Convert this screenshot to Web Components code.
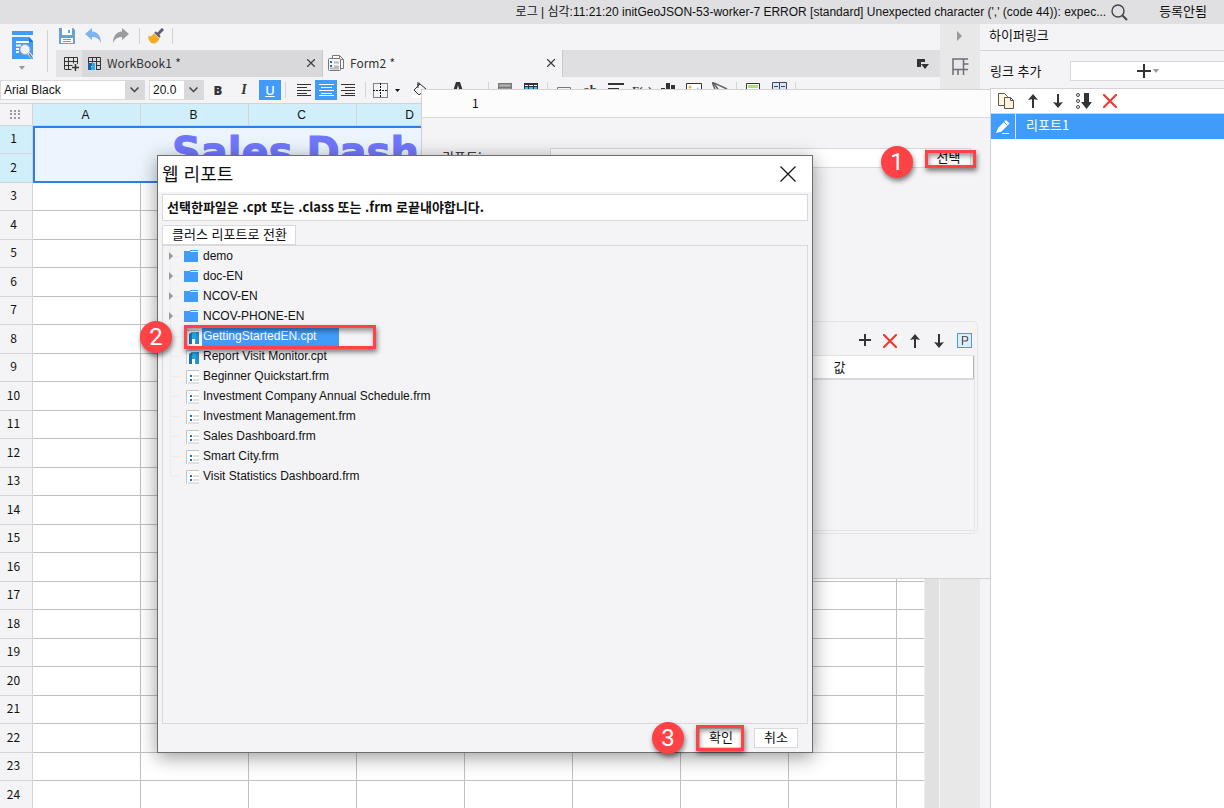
<!DOCTYPE html>
<html lang="ko">
<head>
<meta charset="utf-8">
<title>Report Designer</title>
<style>
html, body { margin: 0; height: 100%; }
body { overflow: hidden; background: #f4f4f6; color: #111; font: 12px/16px "Liberation Sans", "Noto Sans CJK KR", sans-serif; }
</style>
</head>
<body>
<app-shell></app-shell>
<script>
const BASE = `
  *, *::before, *::after { box-sizing: border-box; }
  button, input, select { font: inherit; color: inherit; margin: 0; padding: 0; border: 0; border-radius: 0; background: none; outline: 0; appearance: none; }
  button { display: inline-flex; align-items: center; justify-content: center; flex: none; }
  ul { list-style: none; margin: 0; padding: 0; }
  h1, h2 { margin: 0; font-weight: 400; }
`;
const KR = '"Noto Sans CJK KR", "Noto Sans", sans-serif';

function define(name, css, markup, setup) {
  const template = document.createElement('template');
  template.innerHTML = `<style>${BASE}${css}</style>${markup}`;
  customElements.define(name, class extends HTMLElement {
    constructor() {
      super();
      this.attachShadow({ mode: 'open' }).append(template.content.cloneNode(true));
    }
    connectedCallback() { if (setup) setup(this, this.shadowRoot); }
  });
}

/* Each entry: [width, height, svg body] */
const ICONS = {
  preview: [22, 29, '<path d="M1 0h21v4H1z" fill="#419bf9"/><path d="M1 6h17l4 4v18H1z" fill="#419bf9"/><path d="M18 6v5h4z" fill="#1f6fc4"/><path d="M5 11h13M5 14.500h5M5 18h3M5 21h3" stroke="#fff" stroke-width="2"/><circle cx="14" cy="18.500" r="5" fill="#eef1f6" stroke="#a5adb8"/><path d="M17.500 22l4 4.500" stroke="#fff" stroke-width="3"/><path d="M18 22.500l3 4" stroke="#777" stroke-width="1.500"/>'],
  save: [16, 16, '<path d="M0 0h14l2 2v14H0z" fill="#67a0db"/><path d="M3 0h10v7H3z" fill="#fff"/><path d="M9 2h2v3H9z" fill="#67a0db"/><path d="M2 10h12v5H2z" fill="#fff"/><path d="M4 11.500h8M4 13.500h8" stroke="#67a0db"/>'],
  undo: [17, 16, '<path d="M0 6l7-6v3.500c6 .5 9 5 9 11.500-2-4.500-5-6-9-6V12z" fill="#7db4ee"/>'],
  redo: [17, 16, '<path d="M17 6l-7-6v3.500C4 4 1 8.500 1 15c2-4.500 5-6 9-6V12z" fill="#999b9d"/>'],
  brush: [16, 16, '<path d="M15 1L9 7" stroke="#5b5d72" stroke-width="3"/><path d="M7 4l5 5" stroke="#5b5d72" stroke-width="2"/><path d="M6 5l5.500 5.500C10 14 7.500 16 5 15.500 2 15 .5 12 0 8c2.500 1 4 0 6-3z" fill="#f5ad22"/>'],
  addsheet: [15, 15, '<path d="M.5 13V1.500h13V8M.5 5.500h13M.5 9.500h8M.5 13.500h7M4.500 1.500v12M9.500 1.500v6" fill="none" stroke="#333"/><path d="M11.500 8v7M8 11.500h7" stroke="#333" stroke-width="1.500"/>'],
  book: [14, 14, '<path d="M1.500 8V1.500h12v12H9M1.500 5.500h12M5.500 1.500v5M9.500 1.500v12M9 9.500h4" fill="none" stroke="#333"/><path d="M1 7h6v3H4v4H1z" fill="#1d5fa8"/><path d="M5 7h3v7H4v-3h1z" fill="#2ea7e8"/>'],
  form: [16, 16, '<path d="M4.500 11.500v-11h7l4 4v9h-3" fill="#fff" stroke="#777"/><path d="M11.500.5v4h4" fill="none" stroke="#777"/><rect x=".5" y="3.500" width="12" height="12" rx="1" fill="#f4f4f6" stroke="#777"/><path d="M2 6h2v2H2zM2 10h2v2H2z" fill="#2271b8"/><path d="M6 7.500h5M6 11.500h5M2 13.500h9" stroke="#bbb" stroke-width="2"/>'],
  close: [8, 8, '<path d="M0 0l8 8M8 0L0 8" stroke="#444" stroke-width="1.300"/>'],
  tabmenu: [12, 10, '<path d="M0 0h8v3H4v5H0z" fill="#333"/><path d="M4 5h8L8 10z" fill="#333"/>'],
  dot: [10, 9, '<path d="M0 0h2v2H0zM4 0h2v2H4zM8 0h2v2H8zM0 3h2v2H0zM4 3h2v2H4zM8 3h2v2H8zM0 7h2v2H0zM4 7h2v2H4zM8 7h2v2H8z" fill="#999"/>'],
  down: [9, 6, '<path d="M.5 .5l4 4 4-4" fill="none" stroke="#444" stroke-width="1.500"/>'],
  caret: [5, 3, '<path d="M0 0h5L2.500 3z" fill="#111"/>'],
  caretgray: [6, 4, '<path d="M0 0h6L3 4z" fill="#999"/>'],
  right: [6, 10, '<path d="M0 0l5 5-5 5z" fill="#999"/>'],
  branch: [6, 8, '<path d="M1 0l4 4-4 4z" fill="#999"/>'],
  left_: [15, 12, '<path d="M0 .5h14M0 3.500h10M0 6.500h14M0 9.500h10M0 11.500h14" stroke="#333"/>'],
  center_: [15, 12, '<path d="M0 .5h15M2 3.500h11M0 6.500h15M2 9.500h11M0 11.500h15" stroke="#fff"/>'],
  right_: [15, 12, '<path d="M0 .5h14M4 3.500h10M0 6.500h14M4 9.500h10M0 11.500h14" stroke="#333"/>'],
  border: [15, 15, '<path d="M.5.5h14v14H.5z" fill="none" stroke="#111" stroke-dasharray="1 1"/><path d="M0 7.500h15M7.500 0v15" stroke="#111" stroke-dasharray="2 1"/>'],
  bucket: [16, 16, '<path d="M6 0v6M8 2L2 8l5 5 7-6zM5 3l3-2" fill="none" stroke="#333"/><path d="M13 6c2 3 2 5 1 6s-2-2-1-6z" fill="#333"/><path d="M0 13h16v3H0z" fill="#fff"/>'],
  fontA: [12, 16, '<path d="M4 0h4l4 12H9L8 9H4l-1 3H0zM6 3L5 7h2z" fill="#333" fill-rule="evenodd"/><path d="M0 14h12v2H0z" fill="#d33"/>'],
  merge: [14, 16, '<path d="M0 1h14v14H0z" fill="#999"/><path d="M.5 1.500h13v13H.5zM.5 5.500h13" fill="none" stroke="#777"/><path d="M2 3.500h10" stroke="#bbb"/>'],
  cells: [14, 16, '<path d="M0 1h14v14H0z" fill="#333"/><path d="M1 5h3v3H1zM5 5h4v3H5zM10 5h3v3h-3zM1 9h3v5H1zM5 9h4v5H5zM10 9h3v5h-3z" fill="#3db8ec"/><path d="M1 3h3v1H1zM5 3h4v1H5zM10 3h3v1h-3z" fill="#fff"/>'],
  box: [14, 16, '<path d="M.5 5.500h13v8H.5z" fill="none" stroke="#777"/><path d="M3 8.500h8" stroke="#777"/>'],
  lines: [16, 16, '<path d="M0 2h16M0 7h11M0 12h16" stroke="#333" stroke-width="2"/>'],
  bars: [14, 16, '<path d="M0 6h4v9H0zM5 1h4v14H5zM10 3h4v12h-4z" fill="#333"/>'],
  image: [16, 16, '<path d="M.5 1.500h15v13H.5z" fill="#fff" stroke="#333"/><circle cx="4" cy="5" r="1.500" fill="#f5b52a"/><path d="M2 13l4-4 3 2 3-6 2 8z" fill="#5bbcf0"/>'],
  slash: [16, 16, '<path d="M0 0l15 7M1 0l9 13M0 0l3 7" fill="none" stroke="#666" stroke-width="1.500"/>'],
  green: [14, 16, '<path d="M.5 1.500h13v13H.5z" fill="#fff" stroke="#333"/><path d="M2 3h10v3H2z" fill="#a8e07c"/>'],
  panes: [15, 16, '<path d="M.5.500h14v14H.5z" fill="#d8e6fa" stroke="#445"/><path d="M7.500 1v13M2 4.500h4M9 4.500h4M2 7.500h4M9 7.500h4" stroke="#445"/>'],
  fence: [17, 17, '<path d="M1 17V1h15M1 11.500h15M11.500 1v10.500M11.500 6h5M6 11.500V17M11.500 11.500V17" fill="none" stroke="#6b6d78" stroke-width="1.500"/>'],
  search: [17, 17, '<circle cx="7" cy="7" r="6" fill="none" stroke="#444" stroke-width="1.400"/><path d="M11.500 11.500l4.500 4.500" stroke="#444" stroke-width="2"/>'],
  plus: [14, 14, '<path d="M7 0v14M0 7h14" stroke="#333" stroke-width="2"/>'],
  plus12: [12, 13, '<path d="M6 0v12M0 6h12" stroke="#333" stroke-width="2"/>'],
  copy: [17, 16, '<path d="M.5.5h6l3 3v9h-9z" fill="#fff6e2" stroke="#555"/><path d="M6.500 4.500h6l3 3v8h-9z" fill="#fff3d8" stroke="#555"/><path d="M12.500 4.500v3h3" fill="none" stroke="#555"/>'],
  up: [10, 14, '<path d="M5 14V3" stroke="#333" stroke-width="2"/><path d="M0 6l5-6 5 6-5-1z" fill="#333"/>'],
  dn: [10, 14, '<path d="M5 0v11" stroke="#333" stroke-width="2"/><path d="M0 8l5 6 5-6-5 1z" fill="#333"/>'],
  sort: [16, 16, '<circle cx="2" cy="2" r="1.500" fill="none" stroke="#444"/><circle cx="2" cy="8" r="1.500" fill="none" stroke="#444"/><circle cx="2" cy="14" r="1.500" fill="none" stroke="#444"/><path d="M8 0h5v9h3l-5.500 7L5 9h3z" fill="#333"/>'],
  cross: [14, 14, '<path d="M1 1l12 12M13 1L1 13" stroke="#ec3b34" stroke-width="2.200" stroke-linecap="round"/>'],
  pencil: [14, 14, '<path d="M0 13l2-5 8-8 3.500 3.500-8 8z" fill="#fff"/><path d="M6 13.500h7" stroke="#fff"/><path d="M8 2l3.500 3.500" stroke="#419bf9"/>'],
  param: [15, 15, '<rect x=".5" y=".5" width="14" height="14" fill="#dceefa" stroke="#419bf9"/><path d="M5.500 12V3.500h3a2 2 0 0 1 0 4.500h-3" fill="none" stroke="#555" stroke-width="1.200"/>'],
  x: [16, 16, '<path d="M.5.5l15 15M15.500.5l-15 15" stroke="#111" stroke-width="1.200"/>'],
  folder: [16, 16, '<path d="M0 3h6l1 1h7v10H0z" fill="#419bf9"/><path d="M6 2.500h8" stroke="#419bf9"/>'],
  cpt: [16, 16, '<path d="M2.500 16V2.500H15" fill="none" stroke="#ccc"/><path d="M3 3h12v13H3z" fill="#fff"/><path d="M5 6l3-2v12H5z" fill="#1376b8"/><path d="M8 4h4v6h3v6h-4v-5H8z" fill="#2aa4dc"/><path d="M12 4h3v12h-3z" fill="#1f8fd0"/><path d="M9 11h2v5H9z" fill="#fff"/>'],
  frm: [16, 16, '<path d="M2.500 16V2.500H15" fill="none" stroke="#c4c4c4"/><path d="M3 3h12v13H3z" fill="#fff"/><path d="M6 7h2v2H6zM6 11h2v2H6z" fill="#1b75c4"/><path d="M9 8h6M9 12h6M4 15h11" stroke="#e0e0e2" stroke-width="2"/>'],
};

customElements.define('ui-icon', class extends HTMLElement {
  connectedCallback() {
    const [w, h, body] = ICONS[this.getAttribute('name')];
    const root = this.shadowRoot || this.attachShadow({ mode: 'open' });
    root.innerHTML = `<style>:host{display:inline-flex;flex:none}svg{display:block}</style><svg width="${w}" height="${h}" viewBox="0 0 ${w} ${h}" aria-hidden="true">${body}</svg>`;
  }
});

define('ui-separator', ':host{display:block;width:1px;height:16px;background:#d3d3d5;flex:none}', '');

define('title-bar', `
  :host { display: flex; align-items: center; height: 24px; flex: none; background: #e0e0e2; padding-right: 17px; justify-content: flex-end; }
  .log { white-space: nowrap; }
  button { margin: 0 31px 0 5px; }
  .user { font: 13px/16px ${KR}; padding-bottom: 2px; }
`, `<span class="log">로그 | 심각:11:21:20 initGeoJSON-53-worker-7 ERROR [standard] Unexpected character (',' (code 44)): expec...</span>
  <button aria-label="Search"><ui-icon name="search"></ui-icon></button><span class="user">등록안됨</span>`);

define('main-toolbar', `
  :host { display: flex; height: 53px; flex: none; }
  .preview { width: 48px; display: flex; flex-direction: column; align-items: center; padding: 7px 4px 0 0; gap: 6px; }
  .rule { width: 1px; height: 42px; margin-top: 6px; margin-left: -1px; background: #d3d3d5; }
  .rest { flex: 1; min-width: 0; padding-left: 8px; }
  .quick, .group { display: flex; align-items: center; gap: 10px; }
  .quick { height: 26px; padding: 0 0 2px 3px; }
  .group { gap: 8px; padding-left: -2px; }
  nav { display: flex; height: 27px; background: #dfdfe1; align-items: stretch; }
  .new { width: 26px; background: #e4e4e6; padding-left: 4px; }
  a { display: flex; align-items: center; gap: 6px; width: 241px; padding: 0 7px 2px 5px; color: #333; text-decoration: none; font: 12px/16px ${KR}; border-right: 1px solid #c9c9cb; background: #d9d9db; }
  a.on { background: #f4f4f6; width: 240px; }
  a span { flex: 1; }
  .menu { margin-left: auto; margin-right: 11px; }
`, `<div class="preview"><ui-icon name="preview"></ui-icon><ui-icon name="caretgray"></ui-icon></div><div class="rule"></div>
  <div class="rest"><div class="quick">
    <button aria-label="Save"><ui-icon name="save"></ui-icon></button><button aria-label="Undo"><ui-icon name="undo"></ui-icon></button><button aria-label="Redo"><ui-icon name="redo"></ui-icon></button>
    <div class="group"><ui-separator></ui-separator><button aria-label="Format brush"><ui-icon name="brush"></ui-icon></button><ui-separator></ui-separator></div></div>
  <nav><button class="new" aria-label="New sheet"><ui-icon name="addsheet"></ui-icon></button>
    <a href="#book"><ui-icon name="book"></ui-icon><span>WorkBook1 *</span><ui-icon name="close"></ui-icon></a>
    <a href="#form" class="on"><ui-icon name="form"></ui-icon><span>Form2 *</span><ui-icon name="close"></ui-icon></a>
    <button class="menu" aria-label="Tab list"><ui-icon name="tabmenu"></ui-icon></button></nav></div>`);

define('combo-select', `
  :host { display: flex; position: relative; height: 20px; border: 1px solid #d9d9db; flex: none; background: linear-gradient(#d9d9db, #d9d9db) right / 19px no-repeat #fff; }
  select { width: 100%; padding: 0 20px 0 3px; text-align: left; }
  ui-icon { position: absolute; right: 5px; top: 6px; pointer-events: none; }
`, `<select><option></option></select><ui-icon name="down"></ui-icon>`, (el, root) => {
  root.querySelector('select').setAttribute('aria-label', el.getAttribute('label'));
  root.querySelector('option').textContent = el.getAttribute('value');
});

define('format-toolbar', `
  :host { display: flex; align-items: center; height: 26px; flex: none; overflow: hidden; }
  .font { width: 145px; } .size { width: 55px; margin-left: 4px; }
  button { width: 22px; height: 20px; font: 700 13px/16px "Liberation Serif", serif; color: #333; }
  .set { display: flex; align-items: center; gap: 4px; margin-left: 3px; }
  .b { font-family: "Noto Sans", sans-serif; font-weight: 900; } .i { font-style: italic; font-size: 14px; }
  .u { font-family: "Noto Sans", sans-serif; text-decoration: underline; font-weight: 500; }
  .on { background: #419bf9; color: #fff; }
  .aligns { display: flex; margin: 0 6px 0 7px; }
  .wide { display: flex; align-items: center; gap: 10px; margin: 0 8px; }
  .wide button { width: 16px; }
  .colors { gap: 22px; margin: 0 22px 0 12px; }
  .fx { font-size: 11px; }
`, `<combo-select class="font" label="Font" value="Arial Black"></combo-select><combo-select class="size" label="Size" value="20.0"></combo-select>
  <div class="set"><button class="b">B</button><button class="i">I</button><button class="u on">U</button><ui-separator></ui-separator></div>
  <div class="aligns"><button aria-label="Left"><ui-icon name="left_"></ui-icon></button><button class="on" aria-label="Center"><ui-icon name="center_"></ui-icon></button><button aria-label="Right"><ui-icon name="right_"></ui-icon></button></div>
  <ui-separator></ui-separator>
  <div class="set"><button aria-label="Border"><ui-icon name="border"></ui-icon></button><ui-icon name="caret"></ui-icon></div>
  <div class="wide colors"><button aria-label="Fill"><ui-icon name="bucket"></ui-icon></button><button aria-label="Colour"><ui-icon name="fontA"></ui-icon></button></div>
  <ui-separator></ui-separator>
  <div class="wide"><button aria-label="Merge"><ui-icon name="merge"></ui-icon></button><button aria-label="Split"><ui-icon name="cells"></ui-icon></button></div>
  <ui-separator></ui-separator>
  <div class="wide"><button aria-label="Cell"><ui-icon name="box"></ui-icon></button><button>ab</button><button aria-label="Text"><ui-icon name="lines"></ui-icon></button><button class="fx">F(x)</button><button aria-label="Chart"><ui-icon name="bars"></ui-icon></button><button aria-label="Image"><ui-icon name="image"></ui-icon></button><button aria-label="Slash"><ui-icon name="slash"></ui-icon></button></div>
  <ui-separator></ui-separator>
  <div class="wide"><button aria-label="Widget"><ui-icon name="green"></ui-icon></button><button aria-label="Panes"><ui-icon name="panes"></ui-icon></button></div>
  <ui-separator></ui-separator>`);

define('sheet-grid', `
  :host { display: flex; flex: 1; min-height: 0; overflow: hidden; background: #fff; }
  table { flex: 1; width: 0; table-layout: fixed; border-spacing: 0; align-self: flex-start; }
  th, td { padding: 0; border-right: 1px solid #c0c0c0; border-bottom: 1px solid #c0c0c0; font-weight: 400; white-space: nowrap; overflow: hidden; height: 28px; }
  tr:nth-child(even) > * { height: 29px; }
  thead th { height: 23px; border-color: #d5d5d7; background: #f4f4f6; border-top: 1px solid #d5d5d7; padding-right: 2px; }
  thead th.on, tbody th.on { background: #d0effa; border-color: #d3d3d8; }
  tbody th { background: #f4f4f6; font: 12px/16px ${KR}; padding: 0 5px 3px 0; border-color: #d5d5d7; }
  .title { background: #ecf5fd; border: 0; box-shadow: inset 0 0 0 2px #2f7fea; vertical-align: top; padding: 3px 0 0 139px; font: 700 40px/47px "DejaVu Sans", sans-serif; -webkit-text-stroke: 1px #7077fb; color: #7077fb; }
  th:last-child, td:last-child { border-right: 0; }
  .bar { width: 16px; background: #e1e1e1; border-right: 1px solid #f4f4f6; border-left: 1px solid #eee; }
`, `<table><colgroup></colgroup><thead><tr></tr></thead><tbody></tbody></table><div class="bar"></div>`, (el, root) => {
  const cols = 'ABCDEFGHI'.split('');
  root.querySelector('colgroup').innerHTML = '<col style="width:33px">' + cols.slice(0, 8).map(() => '<col style="width:108px">').join('') + '<col>';
  root.querySelector('thead tr').innerHTML = '<th><ui-icon name="dot"></ui-icon></th>' + cols.map((c, i) => `<th class="${i < 8 ? 'on' : ''}">${i < 8 ? c : ''}</th>`).join('');
  let rows = '';
  for (let r = 1; r <= 24; r++) {
    const cells = r === 1 ? '<td class="title" colspan="8" rowspan="2">Sales Dashboard</td><td></td>' : r === 2 ? '<td></td>' : '<td></td>'.repeat(9);
    rows += `<tr><th class="${r < 3 ? 'on' : ''}">${r}</th>${cells}</tr>`;
  }
  root.querySelector('tbody').innerHTML = rows;
});

define('side-strip', `
  :host { display: flex; flex-direction: column; align-items: center; width: 40px; flex: none; background: #e8e8e8; padding-top: 7px; gap: 17px; }
`, `<button aria-label="Collapse"><ui-icon name="right"></ui-icon></button><button aria-label="Cell panel"><ui-icon name="fence"></ui-icon></button>`);

define('property-panel', `
  :host { display: flex; flex-direction: column; width: 244px; flex: none; font: 13px/18px ${KR}; }
  h2 { font-size: 13px; line-height: 22px; padding-left: 9px; border-bottom: 1px solid #d3d3d5; height: 27px; flex: none; }
  .add { display: flex; align-items: center; height: 37px; padding: 2px 0 0 10px; flex: none; }
  label { width: 80px; }
  .add button { flex: 1; height: 20px; background: #fff; border: 1px solid #d9d9db; border-right: 0; gap: 2px; }
  .list { flex: 1; margin-left: 10px; background: #fff; border: 1px solid #d3d3d5; border-right: 0; border-bottom: 0; }
  .tools { display: flex; align-items: center; height: 24px; padding-left: 7px; gap: 11px; }
  .tools button { min-width: 14px; }
  .item { display: flex; height: 26px; background: #419bf9; color: #fff; border-top: 1px solid #d3d3d5; }
  .item span { line-height: 22px; padding-left: 10px; border-left: 1px solid #d9ebfe; }
  .item button { width: 24px; }
`, `<h2>하이퍼링크</h2><div class="add"><label for="add">링크 추가</label><button id="add"><ui-icon name="plus"></ui-icon><ui-icon name="caretgray"></ui-icon></button></div>
  <div class="list"><div class="tools"><button aria-label="Copy"><ui-icon name="copy"></ui-icon></button><button aria-label="Up"><ui-icon name="up"></ui-icon></button><button aria-label="Down"><ui-icon name="dn"></ui-icon></button><button aria-label="Sort"><ui-icon name="sort"></ui-icon></button><button aria-label="Delete"><ui-icon name="cross"></ui-icon></button></div>
  <div class="item"><button aria-label="Edit"><ui-icon name="pencil"></ui-icon></button><span>리포트1</span></div></div>`);

define('link-editor', `
  :host { display: flex; flex-direction: column; background: #f4f4f6; border: 1px solid #d3d3d5; font: 13px/18px ${KR}; padding-bottom: 44px; }
  .head { height: 28px; background: #fcfcfc; border-bottom: 1px solid #d9d9db; padding: 4px 50px; font-size: 12px; flex: none; }
  .field { display: flex; margin: 30px 19px 0 20px; height: 20px; flex: none; }
  label { width: 108px; }
  input { flex: 1; min-width: 0; background: #fff; border: 1px solid #d9d9db; }
  .field button { width: 45px; background: #fcfcfc; border: 1px solid #d9d9db; padding-bottom: 3px; }
  fieldset { flex: 1; margin: 153px 12px 0 20px; padding: 4px 2px 2px; border: 1px solid #e4e4e6; border-radius: 5px; display: flex; flex-direction: column; min-width: 0; }
  .tools { display: flex; justify-content: flex-end; align-items: center; gap: 12px; height: 29px; padding-right: 3px; flex: none; }
  .tools button { min-width: 12px; }
  .frame { flex: 1; border: 1px solid #e4e4e6; border-left: 0; }
  table { width: 100%; border-spacing: 0; background: #fff; border-bottom: 2px solid #d9d9db; }
  th { width: 50%; height: 22px; padding: 0 0 0 124px; text-align: left; font-weight: 400; }
  th:last-child { border-right: 1px solid #b8b4a6; }
`, `<div class="head">1</div><div class="field"><label for="path">리포트:</label><input id="path"><button>선택</button></div>
  <fieldset><div class="tools"><button aria-label="Add"><ui-icon name="plus12"></ui-icon></button><button aria-label="Delete"><ui-icon name="cross"></ui-icon></button><button aria-label="Up"><ui-icon name="up"></ui-icon></button><button aria-label="Down"><ui-icon name="dn"></ui-icon></button><button aria-label="Parameter"><ui-icon name="param"></ui-icon></button></div>
  <div class="frame"><table><tr><th></th><th>값</th></tr></table></div></fieldset>`);

define('file-tree', `
  :host { display: block; flex: 1; border: 1px solid #d9d9db; }
  li { display: flex; align-items: center; height: 20px; padding-left: 5px; position: relative; }
  li::before { content: ""; position: absolute; left: 7px; top: 0; height: 100%; border-left: 1px solid #ececee; }
  li:last-child::before { height: 50%; }
  li::after { content: ""; position: absolute; left: 8px; top: 10px; width: 9px; border-top: 1px solid #ececee; }
  .exp { width: 16px; display: flex; z-index: 1; }
  .ic { width: 18px; display: flex; }
  .name { padding: 0 1px; line-height: 20px; }
  .sel .name { background: #419bf9; color: #fff; padding-right: 23px; }
`, '<ul role="tree"></ul>', (el, root) => {
  const names = ['demo', 'doc-EN', 'NCOV-EN', 'NCOV-PHONE-EN', 'GettingStartedEN.cpt', 'Report Visit Monitor.cpt', 'Beginner Quickstart.frm', 'Investment Company Annual Schedule.frm', 'Investment Management.frm', 'Sales Dashboard.frm', 'Smart City.frm', 'Visit Statistics Dashboard.frm'];
  root.querySelector('ul').innerHTML = names.map((n, i) => {
    const kind = n.endsWith('.cpt') ? 'cpt' : n.endsWith('.frm') ? 'frm' : 'folder';
    return `<li role="treeitem" class="${i === 4 ? 'sel' : ''}"><span class="exp">${kind === 'folder' ? '<ui-icon name="branch"></ui-icon>' : ''}</span><span class="ic"><ui-icon name="${kind}"></ui-icon></span><span class="name">${n}</span></li>`;
  }).join('');
});

define('file-dialog', `
  :host { display: flex; flex-direction: column; background: #f4f4f6; border: 1px solid #6e6e70; box-shadow: 0 4px 18px rgba(0,0,0,.4); font: 13px/18px ${KR}; }
  header { display: flex; align-items: center; justify-content: space-between; height: 36px; background: #fff; padding: 0 16px 0 4px; flex: none; }
  h1 { font-size: 18px; line-height: 24px; padding-bottom: 2px; }
  .body { flex: 1; display: flex; flex-direction: column; align-items: flex-start; padding: 2px 4px 0; }
  .msg { align-self: stretch; height: 27px; line-height: 24px; padding-left: 4px; background: #fff; border: 1px solid #d9d9db; font-weight: 700; }
  button.t { background: #fff; border: 1px solid #d9d9db; height: 20px; padding: 0 8px 3px 9px; }
  .body .t { margin-top: 4px; }
  file-tree { align-self: stretch; font: 12px/16px "Liberation Sans", sans-serif; }
  footer { display: flex; justify-content: flex-end; gap: 11px; padding: 4px 14px; flex: none; }
  footer button.t { width: 44px; padding-left: 0; padding-right: 0; }
`, `<header><h1>웹 리포트</h1><button aria-label="Close"><ui-icon name="x"></ui-icon></button></header>
  <div class="body"><div class="msg">선택한파일은 .cpt 또는 .class 또는 .frm 로끝내야합니다.</div><button class="t">클러스 리포트로 전환</button><file-tree></file-tree></div>
  <footer><button class="t">확인</button><button class="t">취소</button></footer>`);

define('step-callout', `
  :host { display: flex; align-items: center; gap: 12px; position: absolute; pointer-events: none; }
  b { width: 32px; height: 32px; border-radius: 50%; background: #ff4245; color: #fff; display: grid; place-items: center; font: 400 24px/32px Roboto, sans-serif; box-shadow: 1px 3px 5px rgba(0,0,0,.5); flex: none; }
  i { width: var(--w); height: var(--h); margin-bottom: var(--lift, 0); border: 3px solid #ff4245; box-shadow: 1px 3px 5px rgba(0,0,0,.5), inset 1px 3px 5px rgba(0,0,0,.4); }
`, '<b><slot></slot></b><i></i>');

define('app-shell', `
  :host { display: flex; flex-direction: column; height: 100vh; position: relative; overflow: hidden; }
  .main { display: flex; flex: 1; min-height: 0; }
  .work { display: flex; flex-direction: column; flex: 1; min-width: 0; }
  link-editor { position: absolute; left: 421px; right: 233px; top: 89px; height: 490px; }
  file-dialog { position: absolute; left: 157px; top: 155px; width: 656px; height: 598px; }
  .s1 { left: 881px; top: 146px; --w: 51px; --h: 18px; --lift: 6px; }
  .s2 { left: 140px; top: 321px; --w: 192px; --h: 24px; }
  .s3 { left: 652px; top: 722px; --w: 48px; --h: 26px; }
`, `<title-bar></title-bar><div class="main"><div class="work"><main-toolbar></main-toolbar><format-toolbar></format-toolbar><sheet-grid></sheet-grid></div><side-strip></side-strip><property-panel></property-panel></div>
  <link-editor></link-editor><file-dialog></file-dialog>
  <step-callout class="s1">1</step-callout><step-callout class="s2">2</step-callout><step-callout class="s3">3</step-callout>`);
</script>
</body>
</html>
